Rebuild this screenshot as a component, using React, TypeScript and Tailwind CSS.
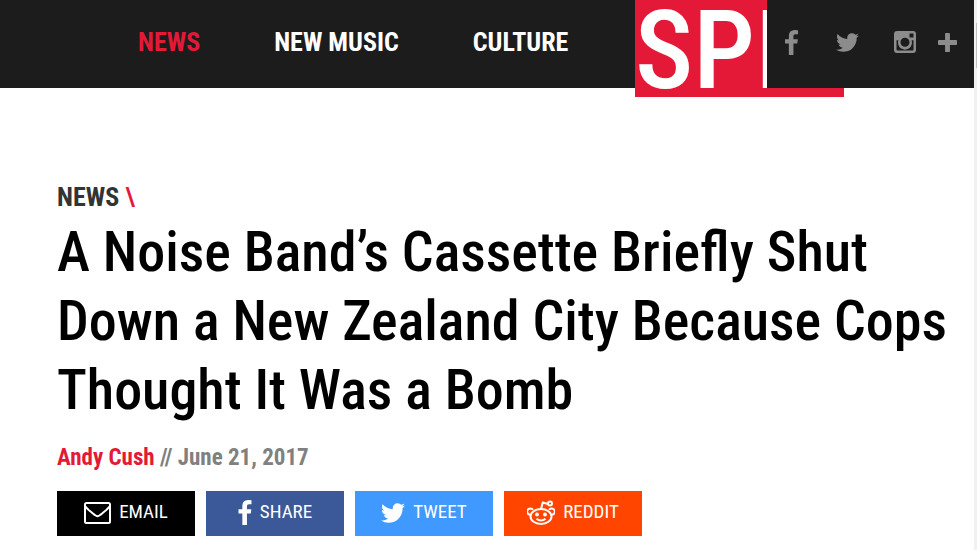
import type { ReactNode } from "react";

const navItems = [
  { label: "NEWS", active: true },
  { label: "NEW MUSIC", active: false },
  { label: "CULTURE", active: false },
];

function FacebookIcon({ className }: { className: string }) {
  return (
    <svg viewBox="479 0 864 1664" className={className} aria-hidden="true">
      <path
        fill="currentColor"
        d="M1343 12v264h-157q-86 0-116 36t-30 108v189h293l-39 296h-254v759h-306v-759h-255v-296h255v-218q0-186 104-288.500t277-102.500q147 0 228 12z"
      />
    </svg>
  );
}

function TwitterIcon({ className }: { className: string }) {
  return (
    <svg viewBox="108 256 1576 1280" className={className} aria-hidden="true">
      <path
        fill="currentColor"
        d="M1684 408q-67 98-162 167 1 14 1 42 0 130-38 259.500t-115.500 248.500-184.500 210.500-258 146-323 54.500q-271 0-496-145 35 4 78 4 225 0 401-138-105-2-188-64.500t-114-159.500q33 5 61 5 43 0 85-11-112-23-185.500-111.500t-73.500-205.500v-4q68 38 146 41-66-44-105-115t-39-154q0-88 44-163 121 149 294.500 238.500t371.500 99.500q-8-38-8-74 0-134 94.500-228.500t228.500-94.500q140 0 236 102 109-21 205-78-37 115-142 178 93-10 186-50z"
      />
    </svg>
  );
}

function InstagramIcon() {
  return (
    <svg viewBox="0 0 22 22" className="h-[22px] w-[22px]" aria-hidden="true">
      <path
        fill="currentColor"
        fillRule="evenodd"
        d="M3 0h16a3 3 0 0 1 3 3v16a3 3 0 0 1-3 3H3a3 3 0 0 1-3-3V3a3 3 0 0 1 3-3Zm12.500 2.500v4h4v-4ZM2.500 9.300v9.200a1 1 0 0 0 1 1h15a1 1 0 0 0 1-1V9.300h-1.900A7 7 0 1 1 4.400 9.300ZM11 6.700a4.500 4.500 0 1 0 0 9 4.500 4.500 0 0 0 0-9Z"
      />
    </svg>
  );
}

function PlusIcon() {
  return (
    <svg viewBox="0 0 18 18" className="h-[19px] w-[19px]" aria-hidden="true">
      <path
        fill="currentColor"
        d="M7.500 0h3a.8.8 0 0 1 .8.8v5.900h5.900a.8.8 0 0 1 .8.8v3a.8.8 0 0 1-.8.8h-5.900v5.900a.8.8 0 0 1-.8.8h-3a.8.8 0 0 1-.8-.8v-5.900H.8a.8.8 0 0 1-.8-.8v-3a.8.8 0 0 1 .8-.8h5.900V.8a.8.8 0 0 1 .8-.8Z"
      />
    </svg>
  );
}

function EnvelopeIcon() {
  return (
    <svg viewBox="0 0 27 22" className="h-[22px] w-[27px]" fill="none" stroke="currentColor" strokeWidth="2" aria-hidden="true">
      <rect x="1" y="1" width="25" height="20" rx="1.500" />
      <path d="M1.500 4.500c1 2 3.500 3.800 7 6.700 2 1.700 3.500 3 5 3s3-1.300 5-3c3.500-2.900 6-4.700 7-6.700" />
    </svg>
  );
}

function RedditIcon() {
  return (
    <svg viewBox="0 0 28 26" className="h-[26px] w-[28px]" fill="none" stroke="currentColor" strokeWidth="2" aria-hidden="true">
      <ellipse cx="14" cy="16.500" rx="10.500" ry="7.500" />
      <path d="M6 9.800a3.200 3.200 0 1 0-3 5M22 9.800a3.200 3.200 0 1 1 3 5" />
      <path d="M14 9l1.800-6.500 5.200 1.500" />
      <circle cx="23" cy="3.500" r="2" />
      <circle cx="10" cy="14.500" r="1.900" fill="currentColor" stroke="none" />
      <circle cx="18" cy="14.500" r="1.900" fill="currentColor" stroke="none" />
      <path d="M9.500 18.800c2.500 2.200 6.500 2.200 9 0" />
    </svg>
  );
}

function ShareButton({ color, label, children }: { color: string; label: string; children: ReactNode }) {
  return (
    <button type="button" className={`flex h-[45px] w-[138px] items-center justify-center gap-2 pb-[2px] text-[19px] text-white ${color}`}>
      {children}
      {label}
    </button>
  );
}

export default function App() {
  return (
    <div className="flex min-h-screen bg-white font-['Roboto_Condensed','Liberation_Sans',sans-serif]">
      <div className="min-w-0 flex-1">
        <header className="relative flex h-[88px] items-start bg-[#1c1c1c]">
          <nav className="flex h-full w-[635px] shrink-0 items-center gap-[74px] pb-1 pl-[138px] text-[26px] font-bold whitespace-nowrap">
            {navItems.map((item) => (
              <a key={item.label} href="#" className={item.active ? "text-[#e31937]" : "text-white"}>
                {item.label}
              </a>
            ))}
          </nav>
          <a href="#" className="block h-[97px] w-[209px] shrink-0 bg-[#e31937] text-[110px] leading-[102px] font-medium text-white">
            SPIN
          </a>
          <div className="absolute top-0 right-0 flex h-[88px] w-[207px] items-center bg-[#1c1c1c] pb-1 pl-[18px] text-[#8c8c8c]">
            <a href="#" aria-label="Facebook" className="flex w-[51px]"><FacebookIcon className="h-[25px] w-[13px]" /></a>
            <a href="#" aria-label="Twitter" className="flex w-[58px]"><TwitterIcon className="h-[19px] w-[23px]" /></a>
            <a href="#" aria-label="Instagram" className="flex w-11"><InstagramIcon /></a>
            <button type="button" aria-label="More"><PlusIcon /></button>
          </div>
        </header>
        <main className="pt-[94px] pr-4 pb-3 pl-[57px]">
          <p className="text-[26px] leading-[30px] font-bold">
            <a href="#" className="text-[#333333]">NEWS</a> <span className="font-medium text-[#e31937]">\</span>
          </p>
          <h1 className="mt-[6px] text-[56px] leading-[69px] font-medium text-black">
            A Noise Band’s Cassette Briefly Shut Down a New Zealand City Because Cops Thought It Was a Bomb
          </h1>
          <p className="mt-5 text-[23px] leading-[26px] font-bold text-[#808080]">
            <a href="#" className="text-[#e31937]">Andy Cush</a> // June 21, 2017
          </p>
          <div className="mt-5 flex gap-[11px]">
            <ShareButton color="bg-black" label="EMAIL"><EnvelopeIcon /></ShareButton>
            <ShareButton color="bg-[#3b5998]" label="SHARE"><FacebookIcon className="h-[25px] w-[14px]" /></ShareButton>
            <ShareButton color="bg-[#4099ff]" label="TWEET"><TwitterIcon className="h-[20px] w-[24px]" /></ShareButton>
            <ShareButton color="bg-[#ff4500]" label="REDDIT"><RedditIcon /></ShareButton>
          </div>
        </main>
      </div>
      <div className="w-[3px] shrink-0 bg-[#f1f1f1] pt-[23px] pl-[2px]">
        <div className="h-[45px] bg-[#c1c1c1]" />
      </div>
    </div>
  );
}
